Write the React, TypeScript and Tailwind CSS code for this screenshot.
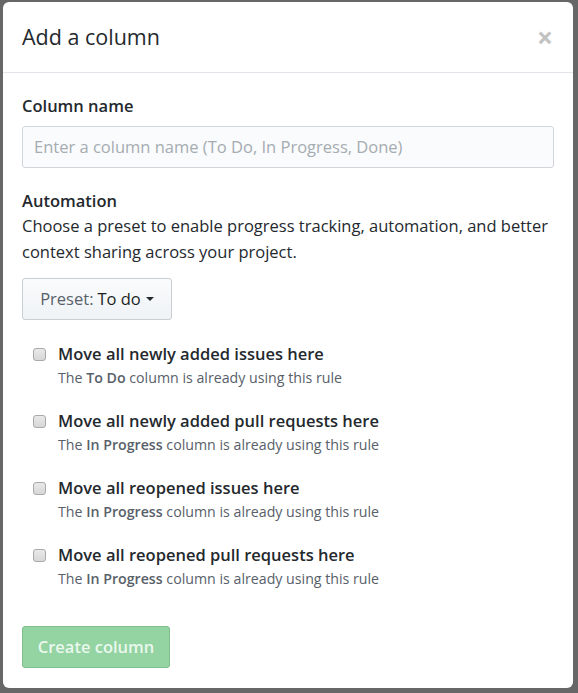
const rules = [
  { title: "Move all newly added issues here", column: "To Do" },
  { title: "Move all newly added pull requests here", column: "In Progress" },
  { title: "Move all reopened issues here", column: "In Progress" },
  { title: "Move all reopened pull requests here", column: "In Progress" },
];

export default function App() {
  return (
    <div
      className="w-[578px] h-[693px] bg-[#676767] pt-[2px] pl-[3px] overflow-hidden"
      style={{ fontFamily: '"Open Sans", "Noto Sans", sans-serif' }}
    >
      <div className="w-[570px] h-[686px] bg-white rounded-[6px] flex flex-col text-[#24292e]">
        {/* Header */}
        <div className="h-[71px] border-b border-[#e1e4e8] flex items-center justify-between pl-[19px] pr-[20px]">
          <h3 className="text-[21.5px] leading-none">Add a column</h3>
          <span className="text-[28px] leading-none font-bold text-[#c2c2c2]">×</span>
        </div>

        {/* Body */}
        <div className="px-[19px] pt-[21px] flex flex-col">
          <label className="text-[16.5px] leading-[24px] font-semibold">Column name</label>
          <div className="mt-[8px] w-[532px] h-[42px] bg-[#fafbfc] border border-[#d1d5da] rounded-[3px] flex items-center px-[11px] text-[16.5px] text-[#a5acb2]">
            Enter a column name (To Do, In Progress, Done)
          </div>

          <div className="mt-[21px] text-[16.5px] leading-[24px] font-semibold">Automation</div>
          <p className="text-[16.5px] leading-[26px]">
            Choose a preset to enable progress tracking, automation, and better context sharing
            across your project.
          </p>

          <button className="mt-[13px] w-[150px] h-[42px] rounded-[3px] border border-[#c9ced3] bg-gradient-to-b from-[#fafbfc] to-[#eff3f6] flex items-center justify-center gap-[4px] text-[16.5px]">
            <span className="text-[#586069]">Preset:</span>
            <span className="font-medium text-[#1b1f23]">To do</span>
            <span className="ml-[1px] w-0 h-0 border-l-[4px] border-r-[4px] border-t-[4px] border-l-transparent border-r-transparent border-t-[#24292e]" />
          </button>

          {/* Automation rules */}
          <div className="mt-[22px] flex flex-col gap-[21px]">
            {rules.map((r) => (
              <div key={r.title} className="flex">
                <div className="w-[36px] pl-[11px] pt-[6px]">
                  <div className="w-[13px] h-[13px] rounded-[3px] border border-[#a9a9a9] bg-gradient-to-b from-[#e9e9e9] to-[#d7d7d7]" />
                </div>
                <div className="flex flex-col">
                  <div className="text-[16.5px] leading-[24px] font-semibold">{r.title}</div>
                  <div className="mt-[2px] text-[14.2px] leading-[20px] text-[#586069]">
                    The <span className="font-semibold">{r.column}</span> column is already using this rule
                  </div>
                </div>
              </div>
            ))}
          </div>

          <button className="mt-[37px] w-[148px] h-[42px] rounded-[3px] border border-[#7fbf8e] bg-[#94d3a2] text-[16.5px] font-semibold text-[#eaf8ee]">
            Create column
          </button>
        </div>
      </div>
    </div>
  );
}
